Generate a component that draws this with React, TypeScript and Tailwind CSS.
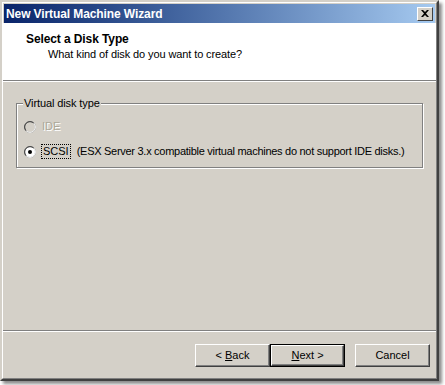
export default function App() {
  const font = { fontFamily: '"Liberation Sans", Arial, sans-serif' };
  return (
    <div className="w-[445px] h-[385px] bg-white" style={font}>
      <div className="w-[439px] h-[381px] flex flex-col bg-[#d4d0c8] border-2 border-t-[#d4d0c8] border-l-[#d4d0c8] border-r-[#404040] border-b-[#404040] shadow-[3px_3px_3px_rgba(0,0,0,0.45)]">
        <div className="flex flex-col flex-1 border border-t-white border-l-white border-r-[#808080] border-b-[#808080]">
          {/* title bar */}
          <div className="h-[19px] mx-px mt-px flex items-center justify-between pl-[2px] pr-[2px] bg-gradient-to-r from-[#0a246a] to-[#a6caf0]">
            <span className="text-white font-bold text-[12px] leading-none tracking-[-0.1px]">New Virtual Machine Wizard</span>
            <div className="w-[16px] h-[14px] bg-[#d4d0c8] flex items-center justify-center border border-t-white border-l-white border-r-[#404040] border-b-[#404040]">
              <svg width="8" height="7" viewBox="0 0 8 7">
                <path d="M0 0h2l2 2 2-2h2L5 3.5 8 7H6L4 5 2 7H0l3-3.5z" fill="#000" />
              </svg>
            </div>
          </div>

          {/* header */}
          <div className="h-[58px] bg-white border-b border-b-[#808080] pl-[23px] pt-[9px]">
            <div className="text-[12px] font-bold text-black leading-[14px] tracking-[-0.1px]">Select a Disk Type</div>
            <div className="text-[11px] text-black leading-[14px] pl-[22px] pt-px tracking-[-0.1px]">What kind of disk do you want to create?</div>
          </div>
          <div className="h-px bg-white" />

          {/* body */}
          <div className="flex-1 flex flex-col">
            <div className="px-[13px] pt-[21px]">
              <div className="relative h-[65px] border border-[#808080] shadow-[inset_1px_1px_0_#fff,1px_1px_0_#fff]">
                <span className="absolute -top-[8px] left-[6px] px-px bg-[#d4d0c8] text-[11px] leading-[14px] text-black tracking-[-0.1px]">Virtual disk type</span>
                <div className="flex flex-col gap-[11px] pl-[7px] pt-[16px]">
                  <div className="flex items-center gap-[5px]">
                    <Radio disabled />
                    <span className="text-[11px] leading-[13px] text-[#aca899] px-px [text-shadow:1px_1px_0_#fff]">IDE</span>
                  </div>
                  <div className="flex items-center gap-[5px] whitespace-nowrap">
                    <Radio checked />
                    <span className="text-[11px] leading-[13px] text-black border border-dotted border-black px-px">SCSI</span>
                    <span className="text-[11px] leading-[13px] text-black ml-[1px] tracking-[-0.28px]">(ESX Server 3.x compatible virtual machines do not support IDE disks.)</span>
                  </div>
                </div>
              </div>
            </div>

            <div className="flex-1" />

            <div className="h-px bg-[#808080]" />
            <div className="h-px bg-white" />

            <div className="h-[46px] flex justify-end items-start pt-[12px] pr-[6px]">
              <Button prefix="< " hot="B" rest="ack" />
              <Button suffix=" >" hot="N" rest="ext" primary />
              <div className="w-[10px] shrink-0" />
              <Button rest="Cancel" />
            </div>
          </div>
        </div>
      </div>
    </div>
  );
}

function Radio({ checked, disabled }: { checked?: boolean; disabled?: boolean }) {
  return (
    <svg width="12" height="12" viewBox="0 0 12 12" className="shrink-0">
      <circle cx="6" cy="6" r="5.5" fill={disabled ? "#d4d0c8" : "#fff"} stroke="#808080" />
      <path d="M2.2 9.8A5 5 0 0 1 9.8 2.2" stroke="#404040" fill="none" />
      <path d="M9.8 2.2A5 5 0 0 1 2.2 9.8" stroke="#fff" fill="none" />
      {checked && <circle cx="6" cy="6" r="2" fill="#000" />}
    </svg>
  );
}

function Button({
  prefix,
  suffix,
  hot,
  rest,
  primary,
}: {
  prefix?: string;
  suffix?: string;
  hot?: string;
  rest: string;
  primary?: boolean;
}) {
  return (
    <div className={"w-[75px] h-[23px] shrink-0 flex " + (primary ? "border border-black" : "")}>
      <div className="flex-1 flex items-center justify-center text-[11px] text-black whitespace-pre border border-t-white border-l-white border-r-[#404040] border-b-[#404040] shadow-[inset_-1px_-1px_0_#808080]">
        <span>
          {prefix}
          {hot && <span className="underline">{hot}</span>}
          {rest}
          {suffix}
        </span>
      </div>
    </div>
  );
}
